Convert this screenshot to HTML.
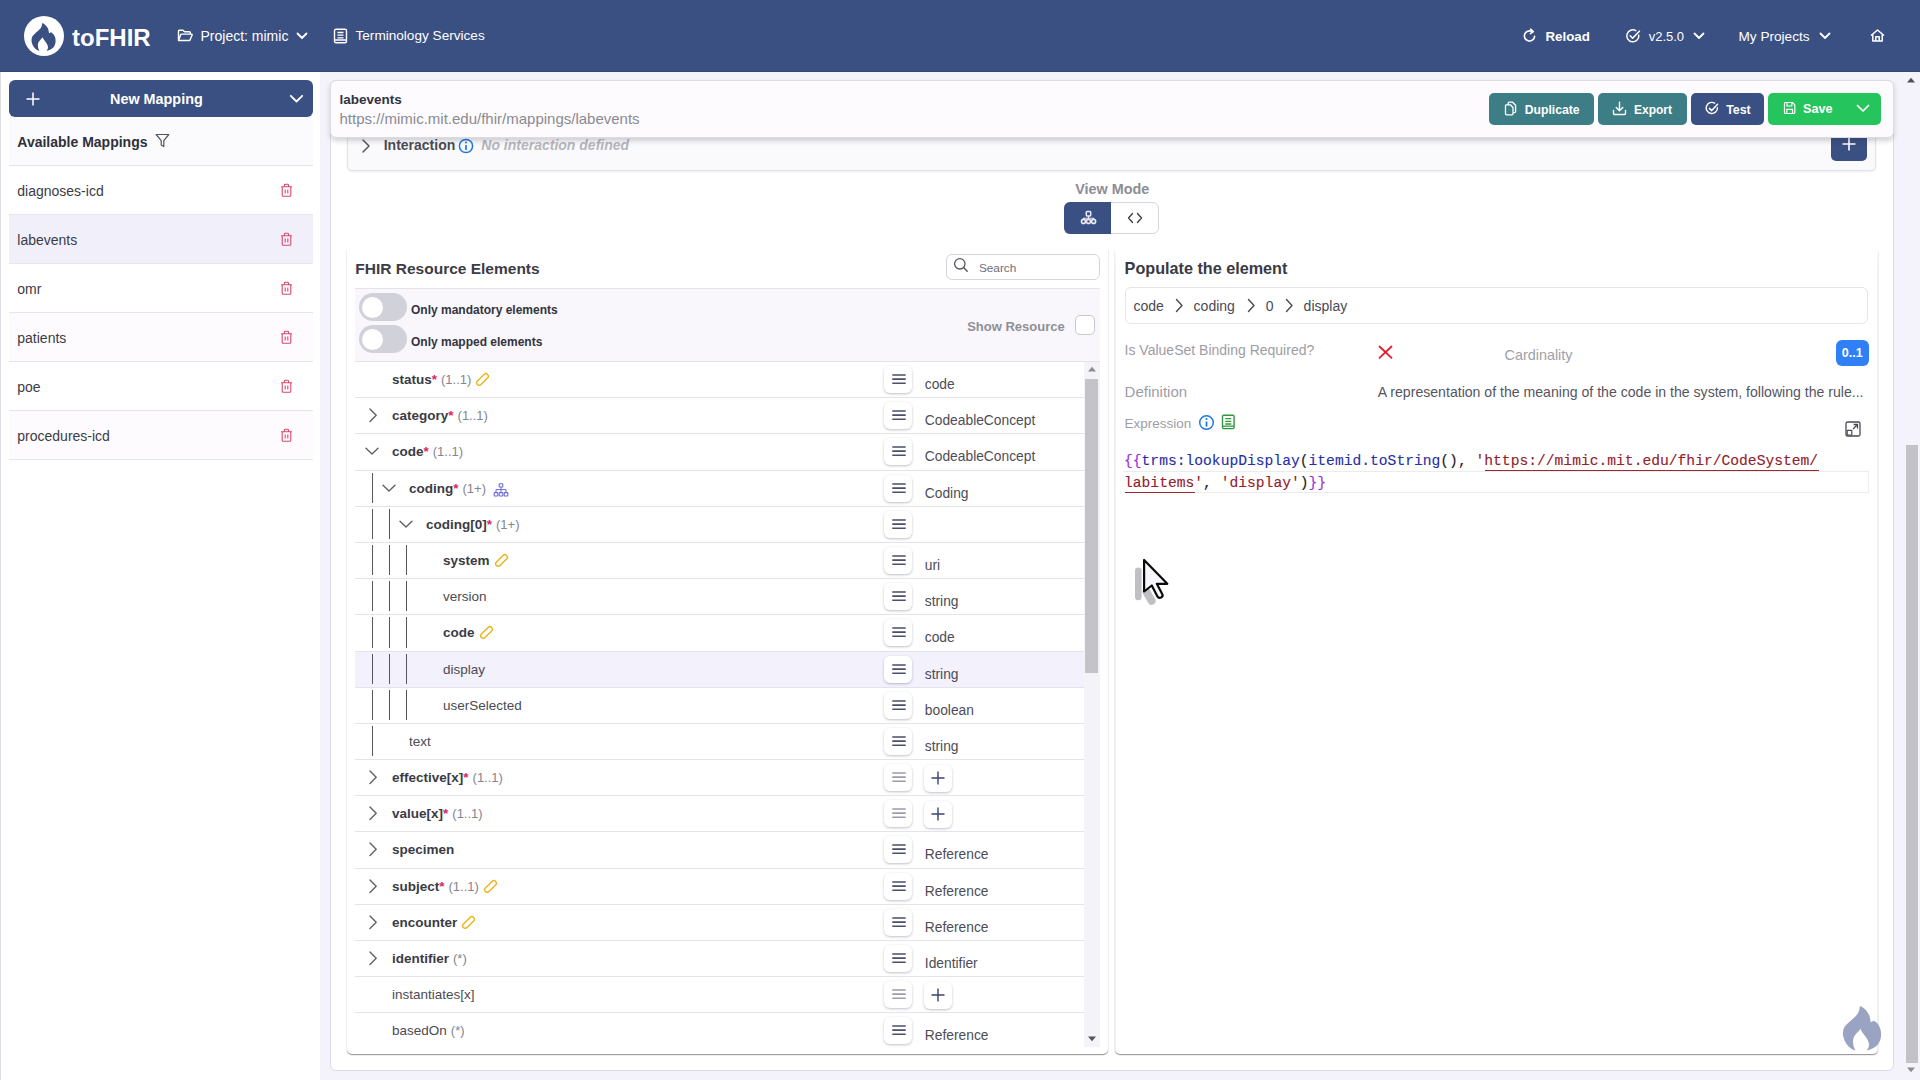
<!DOCTYPE html>
<html><head><meta charset="utf-8"><title>toFHIR</title>
<style>
html,body{margin:0;padding:0;width:1920px;height:1080px;overflow:hidden;background:#f4f3fc;}
body{position:relative;font-family:"Liberation Sans",sans-serif;}
.t{position:absolute;white-space:nowrap;}
.r{position:absolute;box-sizing:border-box;}
</style></head><body>
<div class="r" style="left:0.00px;top:72.00px;width:320.00px;height:1008.00px;background:#ffffff;"></div>
<div class="r" style="left:0.00px;top:72.00px;width:1.00px;height:1008.00px;background:#dedde5;"></div>
<div class="r" style="left:0.00px;top:0.00px;width:1920.00px;height:72.00px;background:#3a5082;"></div>
<div class="r" style="left:0.00px;top:71.00px;width:1920.00px;height:1.00px;background:#33466f;"></div>
<div class="r" style="left:24px;top:16px;width:40px;height:40px;border-radius:50%;background:#fff;"></div>
<svg class="r" style="left:24.00px;top:16.00px;" width="40" height="40" viewBox="0 0 40 40" fill="none"><path d="M18.2 6.9 C20.5 7.6 22.8 10 24 12.5 C24.6 14 24.9 15.8 25 17.2 L27.1 16.3 C29.5 17.5 31 20 31.5 23 C32 27 30.8 30.5 28.5 32.3 C26.5 33.8 24.5 34.6 22.4 35 C23.9 33.5 24.3 31.5 23.7 29.8 C23.2 28 22.2 26.8 21.3 25.6 C20.3 24.3 19.2 23 18.7 21.3 C17.8 22.8 16 24 15 25.6 C14.2 26.8 13.8 28.2 13.9 29.8 C14 31.8 14.6 33.6 15.5 35 C12.5 34.3 8.5 31 7.6 25.5 C7.2 22 8.5 19.5 10.3 18.2 C12.5 16 15.5 13.8 16.6 12.2 C17.6 10.8 18.1 8.8 18.2 6.9 Z" fill="#3a5082"/></svg>
<div class="t" style="left:72.00px;top:27.68px;font-size:24px;line-height:20px;color:#fff;font-weight:bold;font-style:normal;font-family:'Liberation Sans', sans-serif;">toFHIR</div>
<svg class="r" style="left:177.00px;top:29.00px;" width="16" height="13" viewBox="0 0 16 13" fill="none"><path d="M1.5 11.5 V2 C1.5 1.5 1.8 1.2 2.3 1.2 H6 L7.5 2.8 H12.5 C13 2.8 13.3 3.1 13.3 3.6 V5 M1.5 11.5 L3.8 5.6 C3.9 5.3 4.2 5.1 4.5 5.1 H14.6 C15 5.1 15.3 5.5 15.1 5.9 L13 11 C12.9 11.3 12.6 11.5 12.3 11.5 Z" stroke="#fff" stroke-width="1.4" stroke-linejoin="round"/></svg>
<div class="t" style="left:200.50px;top:26.35px;font-size:14px;line-height:20px;color:#fff;font-weight:normal;font-style:normal;font-family:'Liberation Sans', sans-serif;">Project: mimic</div>
<svg class="r" style="left:296.00px;top:32.00px;" width="12" height="8" viewBox="0 0 12 8" fill="none"><path d="M1.5 1.5 L6 6 L10.5 1.5" stroke="#fff" stroke-width="1.8" stroke-linecap="round" stroke-linejoin="round"/></svg>
<svg class="r" style="left:333.00px;top:28.00px;" width="15" height="16" viewBox="0 0 15 16" fill="none"><rect x="1.5" y="1.2" width="12" height="13.6" rx="1.5" stroke="#fff" stroke-width="1.4"/><path d="M4.5 4.5 H10.5 M4.5 7.2 H10.5 M4.5 9.9 H10.5 M1.5 12 H13.5" stroke="#fff" stroke-width="1.3"/></svg>
<div class="t" style="left:355.50px;top:26.49px;font-size:13.6px;line-height:20px;color:#fff;font-weight:normal;font-style:normal;font-family:'Liberation Sans', sans-serif;">Terminology Services</div>
<svg class="r" style="left:1522.00px;top:28.00px;" width="16" height="16" viewBox="0 0 16 16" fill="none"><path d="M12.6 8.2 A5.1 5.1 0 1 1 9.8 3.4" stroke="#fff" stroke-width="1.6" stroke-linecap="round"/><path d="M8.6 1.2 L11.3 3.6 L8.4 5.6" stroke="#fff" stroke-width="1.6" stroke-linecap="round" stroke-linejoin="round"/></svg>
<div class="t" style="left:1545.50px;top:27.19px;font-size:13.3px;line-height:20px;color:#fff;font-weight:bold;font-style:normal;font-family:'Liberation Sans', sans-serif;">Reload</div>
<svg class="r" style="left:1625.00px;top:28.00px;" width="17" height="16" viewBox="0 0 17 16" fill="none"><path d="M13.8 7.2 A6 6 0 1 1 10.8 2.6" stroke="#fff" stroke-width="1.5" stroke-linecap="round"/><path d="M5.2 7.8 L7.6 10.2 L14.4 3.2" stroke="#fff" stroke-width="1.6" stroke-linecap="round" stroke-linejoin="round"/></svg>
<div class="t" style="left:1648.70px;top:27.00px;font-size:13px;line-height:20px;color:#fff;font-weight:normal;font-style:normal;font-family:'Liberation Sans', sans-serif;">v2.5.0</div>
<svg class="r" style="left:1693.00px;top:32.00px;" width="12" height="8" viewBox="0 0 12 8" fill="none"><path d="M1.5 1.5 L6 6 L10.5 1.5" stroke="#fff" stroke-width="1.8" stroke-linecap="round" stroke-linejoin="round"/></svg>
<div class="t" style="left:1738.50px;top:26.79px;font-size:13.6px;line-height:20px;color:#fff;font-weight:normal;font-style:normal;font-family:'Liberation Sans', sans-serif;">My Projects</div>
<svg class="r" style="left:1819.00px;top:32.00px;" width="12" height="8" viewBox="0 0 12 8" fill="none"><path d="M1.5 1.5 L6 6 L10.5 1.5" stroke="#fff" stroke-width="1.8" stroke-linecap="round" stroke-linejoin="round"/></svg>
<svg class="r" style="left:1870.00px;top:29.00px;" width="15" height="13" viewBox="0 0 15 13" fill="none"><path d="M1 6.5 L7.5 1 L14 6.5 M2.8 5.2 V12 H12.2 V5.2 M5.8 12 V7.8 H9.2 V12" stroke="#fff" stroke-width="1.5" stroke-linejoin="round"/></svg>
<div class="r" style="left:9.00px;top:80.00px;width:304.00px;height:37.00px;background:#3a5082;border-radius:6px;"></div>
<svg class="r" style="left:25.00px;top:91.00px;" width="16" height="16" viewBox="0 0 16 16" fill="none"><path d="M8 1.5 V14.5 M1.5 8 H14.5" stroke="#fff" stroke-width="1.5"/></svg>
<div class="t" style="left:110.00px;top:89.01px;font-size:14.4px;line-height:20px;color:#fff;font-weight:bold;font-style:normal;font-family:'Liberation Sans', sans-serif;">New Mapping</div>
<svg class="r" style="left:289.00px;top:94.00px;" width="16" height="10" viewBox="0 0 16 10" fill="none"><path d="M1.8 1.8 L7.5 7.5 L13.2 1.8" stroke="#fff" stroke-width="1.8" stroke-linecap="round" stroke-linejoin="round"/></svg>
<div class="r" style="left:9.00px;top:117.00px;width:304.00px;height:49.00px;background:#fbfafd;border-bottom:1px solid #e4e3ea;"></div>
<div class="t" style="left:17.30px;top:131.85px;font-size:14px;line-height:20px;color:#2f3038;font-weight:bold;font-style:normal;font-family:'Liberation Sans', sans-serif;">Available Mappings</div>
<svg class="r" style="left:155.00px;top:133.00px;" width="15" height="15" viewBox="0 0 15 15" fill="none"><path d="M1.2 1.5 H13.8 L8.8 7.6 V13.6 L6.2 12 V7.6 Z" stroke="#555" stroke-width="1.2" stroke-linejoin="round"/></svg>
<div class="r" style="left:9.00px;top:166.00px;width:304.00px;height:49.00px;background:#ffffff;border-bottom:1px solid #e6e5eb;"></div>
<div class="t" style="left:17.30px;top:180.95px;font-size:14px;line-height:20px;color:#3b3b46;font-weight:normal;font-style:normal;font-family:'Liberation Sans', sans-serif;">diagnoses-icd</div>
<svg class="r" style="left:280.00px;top:183.00px;" width="13" height="14" viewBox="0 0 13 14" fill="none"><path d="M2.2 3.8 H10.8 V12.2 C10.8 12.8 10.4 13.2 9.8 13.2 H3.2 C2.6 13.2 2.2 12.8 2.2 12.2 Z M1 3.8 H12 M4.4 3.8 V2.2 C4.4 1.6 4.8 1.2 5.4 1.2 H7.6 C8.2 1.2 8.6 1.6 8.6 2.2 V3.8 M5.2 6.5 V10.5 M7.8 6.5 V10.5" stroke="#d9486a" stroke-width="1.1" stroke-linejoin="round"/></svg>
<div class="r" style="left:9.00px;top:215.00px;width:304.00px;height:49.00px;background:#f1f0fa;border-bottom:1px solid #e6e5eb;"></div>
<div class="t" style="left:17.30px;top:229.95px;font-size:14px;line-height:20px;color:#3b3b46;font-weight:normal;font-style:normal;font-family:'Liberation Sans', sans-serif;">labevents</div>
<svg class="r" style="left:280.00px;top:232.00px;" width="13" height="14" viewBox="0 0 13 14" fill="none"><path d="M2.2 3.8 H10.8 V12.2 C10.8 12.8 10.4 13.2 9.8 13.2 H3.2 C2.6 13.2 2.2 12.8 2.2 12.2 Z M1 3.8 H12 M4.4 3.8 V2.2 C4.4 1.6 4.8 1.2 5.4 1.2 H7.6 C8.2 1.2 8.6 1.6 8.6 2.2 V3.8 M5.2 6.5 V10.5 M7.8 6.5 V10.5" stroke="#d9486a" stroke-width="1.1" stroke-linejoin="round"/></svg>
<div class="r" style="left:9.00px;top:264.00px;width:304.00px;height:49.00px;background:#ffffff;border-bottom:1px solid #e6e5eb;"></div>
<div class="t" style="left:17.30px;top:278.95px;font-size:14px;line-height:20px;color:#3b3b46;font-weight:normal;font-style:normal;font-family:'Liberation Sans', sans-serif;">omr</div>
<svg class="r" style="left:280.00px;top:281.00px;" width="13" height="14" viewBox="0 0 13 14" fill="none"><path d="M2.2 3.8 H10.8 V12.2 C10.8 12.8 10.4 13.2 9.8 13.2 H3.2 C2.6 13.2 2.2 12.8 2.2 12.2 Z M1 3.8 H12 M4.4 3.8 V2.2 C4.4 1.6 4.8 1.2 5.4 1.2 H7.6 C8.2 1.2 8.6 1.6 8.6 2.2 V3.8 M5.2 6.5 V10.5 M7.8 6.5 V10.5" stroke="#d9486a" stroke-width="1.1" stroke-linejoin="round"/></svg>
<div class="r" style="left:9.00px;top:313.00px;width:304.00px;height:49.00px;background:#fdfbfe;border-bottom:1px solid #e6e5eb;"></div>
<div class="t" style="left:17.30px;top:327.95px;font-size:14px;line-height:20px;color:#3b3b46;font-weight:normal;font-style:normal;font-family:'Liberation Sans', sans-serif;">patients</div>
<svg class="r" style="left:280.00px;top:330.00px;" width="13" height="14" viewBox="0 0 13 14" fill="none"><path d="M2.2 3.8 H10.8 V12.2 C10.8 12.8 10.4 13.2 9.8 13.2 H3.2 C2.6 13.2 2.2 12.8 2.2 12.2 Z M1 3.8 H12 M4.4 3.8 V2.2 C4.4 1.6 4.8 1.2 5.4 1.2 H7.6 C8.2 1.2 8.6 1.6 8.6 2.2 V3.8 M5.2 6.5 V10.5 M7.8 6.5 V10.5" stroke="#d9486a" stroke-width="1.1" stroke-linejoin="round"/></svg>
<div class="r" style="left:9.00px;top:362.00px;width:304.00px;height:49.00px;background:#ffffff;border-bottom:1px solid #e6e5eb;"></div>
<div class="t" style="left:17.30px;top:376.95px;font-size:14px;line-height:20px;color:#3b3b46;font-weight:normal;font-style:normal;font-family:'Liberation Sans', sans-serif;">poe</div>
<svg class="r" style="left:280.00px;top:379.00px;" width="13" height="14" viewBox="0 0 13 14" fill="none"><path d="M2.2 3.8 H10.8 V12.2 C10.8 12.8 10.4 13.2 9.8 13.2 H3.2 C2.6 13.2 2.2 12.8 2.2 12.2 Z M1 3.8 H12 M4.4 3.8 V2.2 C4.4 1.6 4.8 1.2 5.4 1.2 H7.6 C8.2 1.2 8.6 1.6 8.6 2.2 V3.8 M5.2 6.5 V10.5 M7.8 6.5 V10.5" stroke="#d9486a" stroke-width="1.1" stroke-linejoin="round"/></svg>
<div class="r" style="left:9.00px;top:411.00px;width:304.00px;height:49.00px;background:#fdfbfe;border-bottom:1px solid #e6e5eb;"></div>
<div class="t" style="left:17.30px;top:425.95px;font-size:14px;line-height:20px;color:#3b3b46;font-weight:normal;font-style:normal;font-family:'Liberation Sans', sans-serif;">procedures-icd</div>
<svg class="r" style="left:280.00px;top:428.00px;" width="13" height="14" viewBox="0 0 13 14" fill="none"><path d="M2.2 3.8 H10.8 V12.2 C10.8 12.8 10.4 13.2 9.8 13.2 H3.2 C2.6 13.2 2.2 12.8 2.2 12.2 Z M1 3.8 H12 M4.4 3.8 V2.2 C4.4 1.6 4.8 1.2 5.4 1.2 H7.6 C8.2 1.2 8.6 1.6 8.6 2.2 V3.8 M5.2 6.5 V10.5 M7.8 6.5 V10.5" stroke="#d9486a" stroke-width="1.1" stroke-linejoin="round"/></svg>
<div class="r" style="left:330.00px;top:80.00px;width:1564.00px;height:991.00px;background:#ffffff;border:1px solid #dcdbe5;border-radius:6px;"></div>
<div class="r" style="left:347.00px;top:110.00px;width:1529.00px;height:61.00px;background:#fafafc;border:1px solid #e3e2ea;border-radius:5px;box-shadow:0 1px 2px rgba(0,0,0,.08);"></div>
<svg class="r" style="left:360.00px;top:138.00px;" width="12" height="16" viewBox="0 0 12 16" fill="none"><path d="M3 2 L9 8 L3 14" stroke="#55555f" stroke-width="1.5" stroke-linecap="round" stroke-linejoin="round"/></svg>
<div class="t" style="left:383.70px;top:135.45px;font-size:14px;line-height:20px;color:#4a4a55;font-weight:bold;font-style:normal;font-family:'Liberation Sans', sans-serif;">Interaction</div>
<svg class="r" style="left:458.00px;top:138.00px;" width="16" height="16" viewBox="0 0 16 16" fill="none"><circle cx="8" cy="8" r="6.6" stroke="#1f7ae0" stroke-width="1.5"/><path d="M8 7 V12" stroke="#1f7ae0" stroke-width="1.7"/><circle cx="8" cy="4.6" r="1" fill="#1f7ae0"/></svg>
<div class="t" style="left:481.30px;top:135.45px;font-size:14px;line-height:20px;color:#b5b5bd;font-weight:bold;font-style:italic;font-family:'Liberation Sans', sans-serif;">No interaction defined</div>
<div class="r" style="left:1831.00px;top:125.00px;width:36.00px;height:36.00px;background:#3a5082;border-radius:5px;"></div>
<svg class="r" style="left:1841.00px;top:136.00px;" width="16" height="16" viewBox="0 0 16 16" fill="none"><path d="M8 1.5 V14.5 M1.5 8 H14.5" stroke="#fff" stroke-width="1.6"/></svg>
<div class="r" style="left:330.00px;top:80.00px;width:1564.00px;height:57.50px;background:#fdfbfd;border:1px solid #dcdbe1;border-radius:6px;box-shadow:0 3px 5px rgba(40,40,50,.20);"></div>
<div class="t" style="left:339.50px;top:90.32px;font-size:13.5px;line-height:20px;color:#33343c;font-weight:bold;font-style:normal;font-family:'Liberation Sans', sans-serif;">labevents</div>
<div class="t" style="left:339.50px;top:108.50px;font-size:15px;line-height:20px;color:#8a8a92;font-weight:normal;font-style:normal;font-family:'Liberation Sans', sans-serif;">https://mimic.mit.edu/fhir/mappings/labevents</div>
<div class="r" style="left:1489.20px;top:93.30px;width:104.50px;height:31.30px;background:#3d7d85;border-radius:5px;"></div>
<div class="r" style="left:1598.00px;top:93.30px;width:88.80px;height:31.30px;background:#3d7d85;border-radius:5px;"></div>
<div class="r" style="left:1691.20px;top:93.30px;width:72.60px;height:31.30px;background:#3a5082;border-radius:5px;"></div>
<div class="r" style="left:1768.00px;top:93.30px;width:112.80px;height:31.30px;background:#25c45d;border-radius:5px;"></div>
<svg class="r" style="left:1504.00px;top:101.00px;" width="13" height="15" viewBox="0 0 13 15" fill="none"><path d="M4.2 3.8 V2.2 C4.2 1.6 4.6 1.2 5.2 1.2 H8.6 L11.6 4.2 V10.6 C11.6 11.2 11.2 11.6 10.6 11.6 H9 M1.5 4.8 C1.5 4.2 1.9 3.8 2.5 3.8 H6.3 L9 6.5 V12.8 C9 13.4 8.6 13.8 8 13.8 H2.5 C1.9 13.8 1.5 13.4 1.5 12.8 Z" stroke="#fff" stroke-width="1.3" stroke-linejoin="round"/></svg>
<div class="t" style="left:1524.70px;top:99.57px;font-size:12.2px;line-height:20px;color:#fff;font-weight:bold;font-style:normal;font-family:'Liberation Sans', sans-serif;">Duplicate</div>
<svg class="r" style="left:1612.00px;top:101.00px;" width="15" height="15" viewBox="0 0 15 15" fill="none"><path d="M7.5 1.2 V9.5 M4.2 6.4 L7.5 9.7 L10.8 6.4 M1.5 9.5 V12.5 C1.5 13.1 1.9 13.5 2.5 13.5 H12.5 C13.1 13.5 13.5 13.1 13.5 12.5 V9.5" stroke="#fff" stroke-width="1.4" stroke-linecap="round" stroke-linejoin="round"/></svg>
<div class="t" style="left:1634.00px;top:99.64px;font-size:12px;line-height:20px;color:#fff;font-weight:bold;font-style:normal;font-family:'Liberation Sans', sans-serif;">Export</div>
<svg class="r" style="left:1705.00px;top:101.00px;" width="14" height="15" viewBox="0 0 14 15" fill="none"><path d="M12.4 6.6 A5.6 5.6 0 1 1 9.6 2.1" stroke="#fff" stroke-width="1.4" stroke-linecap="round"/><path d="M4.4 7.4 L6.7 9.6 L12.6 3.2" stroke="#fff" stroke-width="1.5" stroke-linecap="round" stroke-linejoin="round"/></svg>
<div class="t" style="left:1726.20px;top:99.50px;font-size:12.4px;line-height:20px;color:#fff;font-weight:bold;font-style:normal;font-family:'Liberation Sans', sans-serif;">Test</div>
<svg class="r" style="left:1783.00px;top:101.00px;" width="13" height="14" viewBox="0 0 13 14" fill="none"><path d="M1.5 2.5 C1.5 1.9 1.9 1.5 2.5 1.5 H9.5 L11.8 3.8 V11.5 C11.8 12.1 11.4 12.5 10.8 12.5 H2.5 C1.9 12.5 1.5 12.1 1.5 11.5 Z M4 1.5 V5 H8.8 V1.5 M3.8 12.5 V8.3 H9.5 V12.5" stroke="#fff" stroke-width="1.2" stroke-linejoin="round"/></svg>
<div class="t" style="left:1803.00px;top:99.43px;font-size:12.6px;line-height:20px;color:#fff;font-weight:bold;font-style:normal;font-family:'Liberation Sans', sans-serif;">Save</div>
<svg class="r" style="left:1856.00px;top:104.00px;" width="14" height="9" viewBox="0 0 14 9" fill="none"><path d="M1.5 1.5 L7 7 L12.5 1.5" stroke="#fff" stroke-width="1.7" stroke-linecap="round" stroke-linejoin="round"/></svg>
<div class="t" style="left:1075.20px;top:179.01px;font-size:14.4px;line-height:20px;color:#8d8d95;font-weight:bold;font-style:normal;font-family:'Liberation Sans', sans-serif;">View Mode</div>
<div class="r" style="left:1064.00px;top:202.00px;width:95.00px;height:32.00px;background:#fff;border:1px solid #d7d6de;border-radius:6px;"></div>
<div class="r" style="left:1064.00px;top:202.00px;width:47.00px;height:32.00px;background:#3a5082;border-radius:6px 0 0 6px;"></div>
<svg class="r" style="left:1080.00px;top:209.00px;" width="17" height="16" viewBox="0 0 17 16" fill="none"><rect x="6.3" y="2.5" width="4.4" height="4.4" rx=".8" stroke="#e6eeff" stroke-width="1.5"/><path d="M8.5 6.9 V9.3 M3.5 10.4 V9.3 H13.6 V10.4 M8.5 9.3 V10.4" stroke="#dfe8ff" stroke-width="1.1"/><circle cx="3.5" cy="12.4" r="2" stroke="#e6eeff" stroke-width="1.6"/><circle cx="8.5" cy="12.4" r="2" stroke="#f4dde3" stroke-width="1.6"/><circle cx="13.6" cy="12.4" r="2" stroke="#e0f0ff" stroke-width="1.6"/></svg>
<svg class="r" style="left:1127.00px;top:211.00px;" width="16" height="14" viewBox="0 0 16 14" fill="none"><path d="M5.5 2.5 L1.5 7 L5.5 11.5 M10.5 2.5 L14.5 7 L10.5 11.5" stroke="#3a3a44" stroke-width="1.3" stroke-linecap="round" stroke-linejoin="round"/></svg>
<div class="r" style="left:347.00px;top:249.00px;width:761.00px;height:805.00px;background:#fff;border-radius:0 0 5px 5px;box-shadow:0 1px 1.2px rgba(0,0,0,.45);"></div>
<div class="r" style="left:346.00px;top:249.00px;width:1.00px;height:802.00px;background:linear-gradient(rgba(240,239,244,0),#f0eff4 20px);"></div>
<div class="r" style="left:1107.50px;top:249.00px;width:1.00px;height:802.00px;background:linear-gradient(rgba(240,239,244,0),#f0eff4 20px);"></div>
<div class="t" style="left:355.30px;top:258.63px;font-size:15.5px;line-height:20px;color:#3c3c46;font-weight:bold;font-style:normal;font-family:'Liberation Sans', sans-serif;">FHIR Resource Elements</div>
<div class="r" style="left:946.20px;top:254.30px;width:153.80px;height:25.40px;background:#fff;border:1px solid #d6d5dc;border-radius:6px;"></div>
<svg class="r" style="left:953.00px;top:257.00px;" width="16" height="16" viewBox="0 0 16 16" fill="none"><circle cx="6.8" cy="6.8" r="5.2" stroke="#55555f" stroke-width="1.3"/><path d="M10.6 10.6 L14.2 14.2" stroke="#55555f" stroke-width="1.4" stroke-linecap="round"/></svg>
<div class="t" style="left:978.90px;top:257.91px;font-size:11.8px;line-height:20px;color:#6e6e78;font-weight:normal;font-style:normal;font-family:'Liberation Sans', sans-serif;">Search</div>
<div class="r" style="left:355.00px;top:287.80px;width:745.00px;height:74.20px;background:#f9f7fb;border-top:1px solid #e4e3e9;border-bottom:1px solid #e4e3e9;"></div>
<div class="r" style="left:359.20px;top:293.00px;width:47.60px;height:28.00px;background:#d0d1d9;border-radius:14px;"></div>
<div class="r" style="left:362.4px;top:296.5px;width:21px;height:21px;border-radius:50%;background:#fff;"></div>
<div class="r" style="left:359.20px;top:325.00px;width:47.60px;height:28.00px;background:#d0d1d9;border-radius:14px;"></div>
<div class="r" style="left:362.4px;top:328.5px;width:21px;height:21px;border-radius:50%;background:#fff;"></div>
<div class="t" style="left:411.00px;top:299.84px;font-size:12px;line-height:20px;color:#33343e;font-weight:bold;font-style:normal;font-family:'Liberation Sans', sans-serif;">Only mandatory elements</div>
<div class="t" style="left:411.00px;top:331.54px;font-size:12px;line-height:20px;color:#33343e;font-weight:bold;font-style:normal;font-family:'Liberation Sans', sans-serif;">Only mapped elements</div>
<div class="t" style="left:967.20px;top:317.30px;font-size:13px;line-height:20px;color:#8f8f98;font-weight:bold;font-style:normal;font-family:'Liberation Sans', sans-serif;">Show Resource</div>
<div class="r" style="left:1074.80px;top:315.00px;width:20.20px;height:20.30px;background:#fff;border:1.5px solid #c9c8cf;border-radius:5px;"></div>
<div class="r" style="left:355.00px;top:361.00px;width:729.00px;height:1.00px;background:#e4e3e9;"></div>
<div class="t" style="left:392.00px;top:370.22px;font-size:13.5px;line-height:20px;color:#3b3b44;font-weight:bold;font-style:normal;font-family:'Liberation Sans', sans-serif;">status</div>
<div class="t" style="left:431.77px;top:370.22px;font-size:13.5px;line-height:20px;color:#e0245e;font-weight:bold;font-style:normal;font-family:'Liberation Sans', sans-serif;">*</div>
<div class="t" style="left:441.03px;top:370.40px;font-size:13px;line-height:20px;color:#85858e;font-weight:normal;font-style:normal;font-family:'Liberation Sans', sans-serif;">(1..1)</div>
<svg class="r" style="left:475.38px;top:371.50px;" width="15" height="15" viewBox="0 0 15 15" fill="none"><rect x="0.3" y="5" width="14.4" height="5" rx="2.5" transform="rotate(-45 7.5 7.5)" stroke="#e9b41c" stroke-width="1.4"/></svg>
<div class="r" style="left:884.00px;top:366.00px;width:28.00px;height:27.00px;background:#fff;border-radius:6px;box-shadow:0 1px 2.5px rgba(30,30,60,.28);"></div>
<svg class="r" style="left:891.50px;top:373.00px;" width="14" height="12" viewBox="0 0 14 12" fill="none"><path d="M.3 2 H13.7 M.3 6.1 H13.7 M.3 10.2 H13.7" stroke="#4a4f6a" stroke-width="1.6"/></svg>
<div class="t" style="left:924.80px;top:375.32px;font-size:13.8px;line-height:20px;color:#4d4d57;font-weight:normal;font-style:normal;font-family:'Liberation Sans', sans-serif;">code</div>
<div class="r" style="left:355.00px;top:397.00px;width:729.00px;height:1.00px;background:#e4e3e9;"></div>
<svg class="r" style="left:367.00px;top:407.00px;" width="12" height="16" viewBox="0 0 12 16" fill="none"><path d="M3 2 L9.2 8.2 L3 14.4" stroke="#606068" stroke-width="1.4" stroke-linecap="round" stroke-linejoin="round"/></svg>
<div class="t" style="left:392.00px;top:406.22px;font-size:13.5px;line-height:20px;color:#3b3b44;font-weight:bold;font-style:normal;font-family:'Liberation Sans', sans-serif;">category</div>
<div class="t" style="left:448.28px;top:406.22px;font-size:13.5px;line-height:20px;color:#e0245e;font-weight:bold;font-style:normal;font-family:'Liberation Sans', sans-serif;">*</div>
<div class="t" style="left:457.55px;top:406.40px;font-size:13px;line-height:20px;color:#85858e;font-weight:normal;font-style:normal;font-family:'Liberation Sans', sans-serif;">(1..1)</div>
<div class="r" style="left:884.00px;top:402.00px;width:28.00px;height:27.00px;background:#fff;border-radius:6px;box-shadow:0 1px 2.5px rgba(30,30,60,.28);"></div>
<svg class="r" style="left:891.50px;top:409.00px;" width="14" height="12" viewBox="0 0 14 12" fill="none"><path d="M.3 2 H13.7 M.3 6.1 H13.7 M.3 10.2 H13.7" stroke="#4a4f6a" stroke-width="1.6"/></svg>
<div class="t" style="left:924.80px;top:411.32px;font-size:13.8px;line-height:20px;color:#4d4d57;font-weight:normal;font-style:normal;font-family:'Liberation Sans', sans-serif;">CodeableConcept</div>
<div class="r" style="left:355.00px;top:433.00px;width:729.00px;height:1.00px;background:#e4e3e9;"></div>
<svg class="r" style="left:364.00px;top:445.00px;" width="16" height="12" viewBox="0 0 16 12" fill="none"><path d="M2 3.2 L8 9 L14 3.2" stroke="#606068" stroke-width="1.4" stroke-linecap="round" stroke-linejoin="round"/></svg>
<div class="t" style="left:392.00px;top:442.22px;font-size:13.5px;line-height:20px;color:#3b3b44;font-weight:bold;font-style:normal;font-family:'Liberation Sans', sans-serif;">code</div>
<div class="t" style="left:423.52px;top:442.22px;font-size:13.5px;line-height:20px;color:#e0245e;font-weight:bold;font-style:normal;font-family:'Liberation Sans', sans-serif;">*</div>
<div class="t" style="left:432.78px;top:442.40px;font-size:13px;line-height:20px;color:#85858e;font-weight:normal;font-style:normal;font-family:'Liberation Sans', sans-serif;">(1..1)</div>
<div class="r" style="left:884.00px;top:438.00px;width:28.00px;height:27.00px;background:#fff;border-radius:6px;box-shadow:0 1px 2.5px rgba(30,30,60,.28);"></div>
<svg class="r" style="left:891.50px;top:445.00px;" width="14" height="12" viewBox="0 0 14 12" fill="none"><path d="M.3 2 H13.7 M.3 6.1 H13.7 M.3 10.2 H13.7" stroke="#4a4f6a" stroke-width="1.6"/></svg>
<div class="t" style="left:924.80px;top:447.32px;font-size:13.8px;line-height:20px;color:#4d4d57;font-weight:normal;font-style:normal;font-family:'Liberation Sans', sans-serif;">CodeableConcept</div>
<div class="r" style="left:355.00px;top:470.00px;width:729.00px;height:1.00px;background:#e4e3e9;"></div>
<div class="r" style="left:372.00px;top:473.00px;width:1.00px;height:30.00px;background:#55555c;"></div>
<svg class="r" style="left:381.00px;top:482.00px;" width="16" height="12" viewBox="0 0 16 12" fill="none"><path d="M2 3.2 L8 9 L14 3.2" stroke="#606068" stroke-width="1.4" stroke-linecap="round" stroke-linejoin="round"/></svg>
<div class="t" style="left:409.00px;top:479.22px;font-size:13.5px;line-height:20px;color:#3b3b44;font-weight:bold;font-style:normal;font-family:'Liberation Sans', sans-serif;">coding</div>
<div class="t" style="left:453.25px;top:479.22px;font-size:13.5px;line-height:20px;color:#e0245e;font-weight:bold;font-style:normal;font-family:'Liberation Sans', sans-serif;">*</div>
<div class="t" style="left:462.52px;top:479.40px;font-size:13px;line-height:20px;color:#85858e;font-weight:normal;font-style:normal;font-family:'Liberation Sans', sans-serif;">(1+)</div>
<svg class="r" style="left:493.00px;top:482.50px;" width="16" height="14" viewBox="0 0 16 14" fill="none"><rect x="6.2" y=".8" width="3.6" height="3.2" rx=".5" stroke="#6a6ad6" stroke-width="1.1"/><path d="M8 4 V6.6 M3 9.4 V6.6 H13 V9.4 M8 6.6 V9.4" stroke="#6a6ad6" stroke-width="1"/><rect x="1.2" y="9.6" width="3.6" height="3.4" rx=".6" stroke="#6a6ad6" stroke-width="1.1"/><rect x="6.2" y="9.6" width="3.6" height="3.4" rx=".6" stroke="#6a6ad6" stroke-width="1.1"/><rect x="11.2" y="9.6" width="3.6" height="3.4" rx=".6" stroke="#6a6ad6" stroke-width="1.1"/></svg>
<div class="r" style="left:884.00px;top:475.00px;width:28.00px;height:27.00px;background:#fff;border-radius:6px;box-shadow:0 1px 2.5px rgba(30,30,60,.28);"></div>
<svg class="r" style="left:891.50px;top:482.00px;" width="14" height="12" viewBox="0 0 14 12" fill="none"><path d="M.3 2 H13.7 M.3 6.1 H13.7 M.3 10.2 H13.7" stroke="#4a4f6a" stroke-width="1.6"/></svg>
<div class="t" style="left:924.80px;top:484.32px;font-size:13.8px;line-height:20px;color:#4d4d57;font-weight:normal;font-style:normal;font-family:'Liberation Sans', sans-serif;">Coding</div>
<div class="r" style="left:355.00px;top:506.00px;width:729.00px;height:1.00px;background:#e4e3e9;"></div>
<div class="r" style="left:372.00px;top:509.00px;width:1.00px;height:30.00px;background:#55555c;"></div>
<div class="r" style="left:389.00px;top:509.00px;width:1.00px;height:30.00px;background:#55555c;"></div>
<svg class="r" style="left:398.00px;top:518.00px;" width="16" height="12" viewBox="0 0 16 12" fill="none"><path d="M2 3.2 L8 9 L14 3.2" stroke="#606068" stroke-width="1.4" stroke-linecap="round" stroke-linejoin="round"/></svg>
<div class="t" style="left:426.00px;top:515.22px;font-size:13.5px;line-height:20px;color:#3b3b44;font-weight:bold;font-style:normal;font-family:'Liberation Sans', sans-serif;">coding[0]</div>
<div class="t" style="left:486.75px;top:515.22px;font-size:13.5px;line-height:20px;color:#e0245e;font-weight:bold;font-style:normal;font-family:'Liberation Sans', sans-serif;">*</div>
<div class="t" style="left:496.02px;top:515.40px;font-size:13px;line-height:20px;color:#85858e;font-weight:normal;font-style:normal;font-family:'Liberation Sans', sans-serif;">(1+)</div>
<div class="r" style="left:884.00px;top:511.00px;width:28.00px;height:27.00px;background:#fff;border-radius:6px;box-shadow:0 1px 2.5px rgba(30,30,60,.28);"></div>
<svg class="r" style="left:891.50px;top:518.00px;" width="14" height="12" viewBox="0 0 14 12" fill="none"><path d="M.3 2 H13.7 M.3 6.1 H13.7 M.3 10.2 H13.7" stroke="#4a4f6a" stroke-width="1.6"/></svg>
<div class="r" style="left:355.00px;top:542.00px;width:729.00px;height:1.00px;background:#e4e3e9;"></div>
<div class="r" style="left:372.00px;top:545.00px;width:1.00px;height:30.00px;background:#55555c;"></div>
<div class="r" style="left:389.00px;top:545.00px;width:1.00px;height:30.00px;background:#55555c;"></div>
<div class="r" style="left:406.00px;top:545.00px;width:1.00px;height:30.00px;background:#55555c;"></div>
<div class="t" style="left:443.00px;top:551.22px;font-size:13.5px;line-height:20px;color:#3b3b44;font-weight:bold;font-style:normal;font-family:'Liberation Sans', sans-serif;">system</div>
<svg class="r" style="left:493.55px;top:552.50px;" width="15" height="15" viewBox="0 0 15 15" fill="none"><rect x="0.3" y="5" width="14.4" height="5" rx="2.5" transform="rotate(-45 7.5 7.5)" stroke="#e9b41c" stroke-width="1.4"/></svg>
<div class="r" style="left:884.00px;top:547.00px;width:28.00px;height:27.00px;background:#fff;border-radius:6px;box-shadow:0 1px 2.5px rgba(30,30,60,.28);"></div>
<svg class="r" style="left:891.50px;top:554.00px;" width="14" height="12" viewBox="0 0 14 12" fill="none"><path d="M.3 2 H13.7 M.3 6.1 H13.7 M.3 10.2 H13.7" stroke="#4a4f6a" stroke-width="1.6"/></svg>
<div class="t" style="left:924.80px;top:556.32px;font-size:13.8px;line-height:20px;color:#4d4d57;font-weight:normal;font-style:normal;font-family:'Liberation Sans', sans-serif;">uri</div>
<div class="r" style="left:355.00px;top:578.00px;width:729.00px;height:1.00px;background:#e4e3e9;"></div>
<div class="r" style="left:372.00px;top:581.00px;width:1.00px;height:30.00px;background:#55555c;"></div>
<div class="r" style="left:389.00px;top:581.00px;width:1.00px;height:30.00px;background:#55555c;"></div>
<div class="r" style="left:406.00px;top:581.00px;width:1.00px;height:30.00px;background:#55555c;"></div>
<div class="t" style="left:443.00px;top:587.22px;font-size:13.5px;line-height:20px;color:#4b4b53;font-weight:normal;font-style:normal;font-family:'Liberation Sans', sans-serif;">version</div>
<div class="r" style="left:884.00px;top:583.00px;width:28.00px;height:27.00px;background:#fff;border-radius:6px;box-shadow:0 1px 2.5px rgba(30,30,60,.28);"></div>
<svg class="r" style="left:891.50px;top:590.00px;" width="14" height="12" viewBox="0 0 14 12" fill="none"><path d="M.3 2 H13.7 M.3 6.1 H13.7 M.3 10.2 H13.7" stroke="#4a4f6a" stroke-width="1.6"/></svg>
<div class="t" style="left:924.80px;top:592.32px;font-size:13.8px;line-height:20px;color:#4d4d57;font-weight:normal;font-style:normal;font-family:'Liberation Sans', sans-serif;">string</div>
<div class="r" style="left:355.00px;top:614.00px;width:729.00px;height:1.00px;background:#e4e3e9;"></div>
<div class="r" style="left:372.00px;top:617.00px;width:1.00px;height:31.00px;background:#55555c;"></div>
<div class="r" style="left:389.00px;top:617.00px;width:1.00px;height:31.00px;background:#55555c;"></div>
<div class="r" style="left:406.00px;top:617.00px;width:1.00px;height:31.00px;background:#55555c;"></div>
<div class="t" style="left:443.00px;top:623.22px;font-size:13.5px;line-height:20px;color:#3b3b44;font-weight:bold;font-style:normal;font-family:'Liberation Sans', sans-serif;">code</div>
<svg class="r" style="left:478.52px;top:624.50px;" width="15" height="15" viewBox="0 0 15 15" fill="none"><rect x="0.3" y="5" width="14.4" height="5" rx="2.5" transform="rotate(-45 7.5 7.5)" stroke="#e9b41c" stroke-width="1.4"/></svg>
<div class="r" style="left:884.00px;top:619.00px;width:28.00px;height:27.00px;background:#fff;border-radius:6px;box-shadow:0 1px 2.5px rgba(30,30,60,.28);"></div>
<svg class="r" style="left:891.50px;top:626.00px;" width="14" height="12" viewBox="0 0 14 12" fill="none"><path d="M.3 2 H13.7 M.3 6.1 H13.7 M.3 10.2 H13.7" stroke="#4a4f6a" stroke-width="1.6"/></svg>
<div class="t" style="left:924.80px;top:628.32px;font-size:13.8px;line-height:20px;color:#4d4d57;font-weight:normal;font-style:normal;font-family:'Liberation Sans', sans-serif;">code</div>
<div class="r" style="left:355.00px;top:651.00px;width:729.00px;height:36.00px;background:#f3f1fc;"></div>
<div class="r" style="left:355.00px;top:651.00px;width:729.00px;height:1.00px;background:#e4e3e9;"></div>
<div class="r" style="left:372.00px;top:654.00px;width:1.00px;height:30.00px;background:#55555c;"></div>
<div class="r" style="left:389.00px;top:654.00px;width:1.00px;height:30.00px;background:#55555c;"></div>
<div class="r" style="left:406.00px;top:654.00px;width:1.00px;height:30.00px;background:#55555c;"></div>
<div class="t" style="left:443.00px;top:660.22px;font-size:13.5px;line-height:20px;color:#4b4b53;font-weight:normal;font-style:normal;font-family:'Liberation Sans', sans-serif;">display</div>
<div class="r" style="left:884.00px;top:656.00px;width:28.00px;height:27.00px;background:#fff;border-radius:6px;box-shadow:0 1px 2.5px rgba(30,30,60,.28);"></div>
<svg class="r" style="left:891.50px;top:663.00px;" width="14" height="12" viewBox="0 0 14 12" fill="none"><path d="M.3 2 H13.7 M.3 6.1 H13.7 M.3 10.2 H13.7" stroke="#4a4f6a" stroke-width="1.6"/></svg>
<div class="t" style="left:924.80px;top:665.32px;font-size:13.8px;line-height:20px;color:#4d4d57;font-weight:normal;font-style:normal;font-family:'Liberation Sans', sans-serif;">string</div>
<div class="r" style="left:355.00px;top:687.00px;width:729.00px;height:1.00px;background:#e4e3e9;"></div>
<div class="r" style="left:372.00px;top:690.00px;width:1.00px;height:30.00px;background:#55555c;"></div>
<div class="r" style="left:389.00px;top:690.00px;width:1.00px;height:30.00px;background:#55555c;"></div>
<div class="r" style="left:406.00px;top:690.00px;width:1.00px;height:30.00px;background:#55555c;"></div>
<div class="t" style="left:443.00px;top:696.22px;font-size:13.5px;line-height:20px;color:#4b4b53;font-weight:normal;font-style:normal;font-family:'Liberation Sans', sans-serif;">userSelected</div>
<div class="r" style="left:884.00px;top:692.00px;width:28.00px;height:27.00px;background:#fff;border-radius:6px;box-shadow:0 1px 2.5px rgba(30,30,60,.28);"></div>
<svg class="r" style="left:891.50px;top:699.00px;" width="14" height="12" viewBox="0 0 14 12" fill="none"><path d="M.3 2 H13.7 M.3 6.1 H13.7 M.3 10.2 H13.7" stroke="#4a4f6a" stroke-width="1.6"/></svg>
<div class="t" style="left:924.80px;top:701.32px;font-size:13.8px;line-height:20px;color:#4d4d57;font-weight:normal;font-style:normal;font-family:'Liberation Sans', sans-serif;">boolean</div>
<div class="r" style="left:355.00px;top:723.00px;width:729.00px;height:1.00px;background:#e4e3e9;"></div>
<div class="r" style="left:372.00px;top:726.00px;width:1.00px;height:30.00px;background:#55555c;"></div>
<div class="t" style="left:409.00px;top:732.22px;font-size:13.5px;line-height:20px;color:#4b4b53;font-weight:normal;font-style:normal;font-family:'Liberation Sans', sans-serif;">text</div>
<div class="r" style="left:884.00px;top:728.00px;width:28.00px;height:27.00px;background:#fff;border-radius:6px;box-shadow:0 1px 2.5px rgba(30,30,60,.28);"></div>
<svg class="r" style="left:891.50px;top:735.00px;" width="14" height="12" viewBox="0 0 14 12" fill="none"><path d="M.3 2 H13.7 M.3 6.1 H13.7 M.3 10.2 H13.7" stroke="#4a4f6a" stroke-width="1.6"/></svg>
<div class="t" style="left:924.80px;top:737.32px;font-size:13.8px;line-height:20px;color:#4d4d57;font-weight:normal;font-style:normal;font-family:'Liberation Sans', sans-serif;">string</div>
<div class="r" style="left:355.00px;top:759.00px;width:729.00px;height:1.00px;background:#e4e3e9;"></div>
<svg class="r" style="left:367.00px;top:769.00px;" width="12" height="16" viewBox="0 0 12 16" fill="none"><path d="M3 2 L9.2 8.2 L3 14.4" stroke="#606068" stroke-width="1.4" stroke-linecap="round" stroke-linejoin="round"/></svg>
<div class="t" style="left:392.00px;top:768.22px;font-size:13.5px;line-height:20px;color:#3b3b44;font-weight:bold;font-style:normal;font-family:'Liberation Sans', sans-serif;">effective[x]</div>
<div class="t" style="left:463.28px;top:768.22px;font-size:13.5px;line-height:20px;color:#e0245e;font-weight:bold;font-style:normal;font-family:'Liberation Sans', sans-serif;">*</div>
<div class="t" style="left:472.55px;top:768.40px;font-size:13px;line-height:20px;color:#85858e;font-weight:normal;font-style:normal;font-family:'Liberation Sans', sans-serif;">(1..1)</div>
<div class="r" style="left:884.00px;top:764.00px;width:28.00px;height:27.00px;background:#fff;border-radius:6px;box-shadow:0 1px 2.5px rgba(30,30,60,.28);"></div>
<svg class="r" style="left:891.50px;top:771.00px;" width="14" height="12" viewBox="0 0 14 12" fill="none"><path d="M.3 2 H13.7 M.3 6.1 H13.7 M.3 10.2 H13.7" stroke="#9a9cab" stroke-width="1.6"/></svg>
<div class="r" style="left:924.20px;top:765.00px;width:27.80px;height:27.00px;background:#fff;border-radius:6px;box-shadow:0 1px 2.5px rgba(30,30,60,.28);"></div>
<svg class="r" style="left:930.00px;top:769.50px;" width="16" height="16" viewBox="0 0 16 16" fill="none"><path d="M8 1.5 V14.5 M1.5 8 H14.5" stroke="#3a4470" stroke-width="1.4"/></svg>
<div class="r" style="left:355.00px;top:795.00px;width:729.00px;height:1.00px;background:#e4e3e9;"></div>
<svg class="r" style="left:367.00px;top:805.00px;" width="12" height="16" viewBox="0 0 12 16" fill="none"><path d="M3 2 L9.2 8.2 L3 14.4" stroke="#606068" stroke-width="1.4" stroke-linecap="round" stroke-linejoin="round"/></svg>
<div class="t" style="left:392.00px;top:804.22px;font-size:13.5px;line-height:20px;color:#3b3b44;font-weight:bold;font-style:normal;font-family:'Liberation Sans', sans-serif;">value[x]</div>
<div class="t" style="left:443.03px;top:804.22px;font-size:13.5px;line-height:20px;color:#e0245e;font-weight:bold;font-style:normal;font-family:'Liberation Sans', sans-serif;">*</div>
<div class="t" style="left:452.30px;top:804.40px;font-size:13px;line-height:20px;color:#85858e;font-weight:normal;font-style:normal;font-family:'Liberation Sans', sans-serif;">(1..1)</div>
<div class="r" style="left:884.00px;top:800.00px;width:28.00px;height:27.00px;background:#fff;border-radius:6px;box-shadow:0 1px 2.5px rgba(30,30,60,.28);"></div>
<svg class="r" style="left:891.50px;top:807.00px;" width="14" height="12" viewBox="0 0 14 12" fill="none"><path d="M.3 2 H13.7 M.3 6.1 H13.7 M.3 10.2 H13.7" stroke="#9a9cab" stroke-width="1.6"/></svg>
<div class="r" style="left:924.20px;top:801.00px;width:27.80px;height:27.00px;background:#fff;border-radius:6px;box-shadow:0 1px 2.5px rgba(30,30,60,.28);"></div>
<svg class="r" style="left:930.00px;top:805.50px;" width="16" height="16" viewBox="0 0 16 16" fill="none"><path d="M8 1.5 V14.5 M1.5 8 H14.5" stroke="#3a4470" stroke-width="1.4"/></svg>
<div class="r" style="left:355.00px;top:831.00px;width:729.00px;height:1.00px;background:#e4e3e9;"></div>
<svg class="r" style="left:367.00px;top:841.00px;" width="12" height="16" viewBox="0 0 12 16" fill="none"><path d="M3 2 L9.2 8.2 L3 14.4" stroke="#606068" stroke-width="1.4" stroke-linecap="round" stroke-linejoin="round"/></svg>
<div class="t" style="left:392.00px;top:840.22px;font-size:13.5px;line-height:20px;color:#3b3b44;font-weight:bold;font-style:normal;font-family:'Liberation Sans', sans-serif;">specimen</div>
<div class="r" style="left:884.00px;top:836.00px;width:28.00px;height:27.00px;background:#fff;border-radius:6px;box-shadow:0 1px 2.5px rgba(30,30,60,.28);"></div>
<svg class="r" style="left:891.50px;top:843.00px;" width="14" height="12" viewBox="0 0 14 12" fill="none"><path d="M.3 2 H13.7 M.3 6.1 H13.7 M.3 10.2 H13.7" stroke="#4a4f6a" stroke-width="1.6"/></svg>
<div class="t" style="left:924.80px;top:845.32px;font-size:13.8px;line-height:20px;color:#4d4d57;font-weight:normal;font-style:normal;font-family:'Liberation Sans', sans-serif;">Reference</div>
<div class="r" style="left:355.00px;top:868.00px;width:729.00px;height:1.00px;background:#e4e3e9;"></div>
<svg class="r" style="left:367.00px;top:878.00px;" width="12" height="16" viewBox="0 0 12 16" fill="none"><path d="M3 2 L9.2 8.2 L3 14.4" stroke="#606068" stroke-width="1.4" stroke-linecap="round" stroke-linejoin="round"/></svg>
<div class="t" style="left:392.00px;top:877.22px;font-size:13.5px;line-height:20px;color:#3b3b44;font-weight:bold;font-style:normal;font-family:'Liberation Sans', sans-serif;">subject</div>
<div class="t" style="left:439.27px;top:877.22px;font-size:13.5px;line-height:20px;color:#e0245e;font-weight:bold;font-style:normal;font-family:'Liberation Sans', sans-serif;">*</div>
<div class="t" style="left:448.53px;top:877.40px;font-size:13px;line-height:20px;color:#85858e;font-weight:normal;font-style:normal;font-family:'Liberation Sans', sans-serif;">(1..1)</div>
<svg class="r" style="left:482.88px;top:878.50px;" width="15" height="15" viewBox="0 0 15 15" fill="none"><rect x="0.3" y="5" width="14.4" height="5" rx="2.5" transform="rotate(-45 7.5 7.5)" stroke="#e9b41c" stroke-width="1.4"/></svg>
<div class="r" style="left:884.00px;top:873.00px;width:28.00px;height:27.00px;background:#fff;border-radius:6px;box-shadow:0 1px 2.5px rgba(30,30,60,.28);"></div>
<svg class="r" style="left:891.50px;top:880.00px;" width="14" height="12" viewBox="0 0 14 12" fill="none"><path d="M.3 2 H13.7 M.3 6.1 H13.7 M.3 10.2 H13.7" stroke="#4a4f6a" stroke-width="1.6"/></svg>
<div class="t" style="left:924.80px;top:882.32px;font-size:13.8px;line-height:20px;color:#4d4d57;font-weight:normal;font-style:normal;font-family:'Liberation Sans', sans-serif;">Reference</div>
<div class="r" style="left:355.00px;top:904.00px;width:729.00px;height:1.00px;background:#e4e3e9;"></div>
<svg class="r" style="left:367.00px;top:914.00px;" width="12" height="16" viewBox="0 0 12 16" fill="none"><path d="M3 2 L9.2 8.2 L3 14.4" stroke="#606068" stroke-width="1.4" stroke-linecap="round" stroke-linejoin="round"/></svg>
<div class="t" style="left:392.00px;top:913.22px;font-size:13.5px;line-height:20px;color:#3b3b44;font-weight:bold;font-style:normal;font-family:'Liberation Sans', sans-serif;">encounter</div>
<svg class="r" style="left:461.27px;top:914.50px;" width="15" height="15" viewBox="0 0 15 15" fill="none"><rect x="0.3" y="5" width="14.4" height="5" rx="2.5" transform="rotate(-45 7.5 7.5)" stroke="#e9b41c" stroke-width="1.4"/></svg>
<div class="r" style="left:884.00px;top:909.00px;width:28.00px;height:27.00px;background:#fff;border-radius:6px;box-shadow:0 1px 2.5px rgba(30,30,60,.28);"></div>
<svg class="r" style="left:891.50px;top:916.00px;" width="14" height="12" viewBox="0 0 14 12" fill="none"><path d="M.3 2 H13.7 M.3 6.1 H13.7 M.3 10.2 H13.7" stroke="#4a4f6a" stroke-width="1.6"/></svg>
<div class="t" style="left:924.80px;top:918.32px;font-size:13.8px;line-height:20px;color:#4d4d57;font-weight:normal;font-style:normal;font-family:'Liberation Sans', sans-serif;">Reference</div>
<div class="r" style="left:355.00px;top:940.00px;width:729.00px;height:1.00px;background:#e4e3e9;"></div>
<svg class="r" style="left:367.00px;top:950.00px;" width="12" height="16" viewBox="0 0 12 16" fill="none"><path d="M3 2 L9.2 8.2 L3 14.4" stroke="#606068" stroke-width="1.4" stroke-linecap="round" stroke-linejoin="round"/></svg>
<div class="t" style="left:392.00px;top:949.22px;font-size:13.5px;line-height:20px;color:#3b3b44;font-weight:bold;font-style:normal;font-family:'Liberation Sans', sans-serif;">identifier</div>
<div class="t" style="left:453.02px;top:949.40px;font-size:13px;line-height:20px;color:#85858e;font-weight:normal;font-style:normal;font-family:'Liberation Sans', sans-serif;">(*)</div>
<div class="r" style="left:884.00px;top:945.00px;width:28.00px;height:27.00px;background:#fff;border-radius:6px;box-shadow:0 1px 2.5px rgba(30,30,60,.28);"></div>
<svg class="r" style="left:891.50px;top:952.00px;" width="14" height="12" viewBox="0 0 14 12" fill="none"><path d="M.3 2 H13.7 M.3 6.1 H13.7 M.3 10.2 H13.7" stroke="#4a4f6a" stroke-width="1.6"/></svg>
<div class="t" style="left:924.80px;top:954.32px;font-size:13.8px;line-height:20px;color:#4d4d57;font-weight:normal;font-style:normal;font-family:'Liberation Sans', sans-serif;">Identifier</div>
<div class="r" style="left:355.00px;top:976.00px;width:729.00px;height:1.00px;background:#e4e3e9;"></div>
<div class="t" style="left:392.00px;top:985.22px;font-size:13.5px;line-height:20px;color:#4b4b53;font-weight:normal;font-style:normal;font-family:'Liberation Sans', sans-serif;">instantiates[x]</div>
<div class="r" style="left:884.00px;top:981.00px;width:28.00px;height:27.00px;background:#fff;border-radius:6px;box-shadow:0 1px 2.5px rgba(30,30,60,.28);"></div>
<svg class="r" style="left:891.50px;top:988.00px;" width="14" height="12" viewBox="0 0 14 12" fill="none"><path d="M.3 2 H13.7 M.3 6.1 H13.7 M.3 10.2 H13.7" stroke="#9a9cab" stroke-width="1.6"/></svg>
<div class="r" style="left:924.20px;top:982.00px;width:27.80px;height:27.00px;background:#fff;border-radius:6px;box-shadow:0 1px 2.5px rgba(30,30,60,.28);"></div>
<svg class="r" style="left:930.00px;top:986.50px;" width="16" height="16" viewBox="0 0 16 16" fill="none"><path d="M8 1.5 V14.5 M1.5 8 H14.5" stroke="#3a4470" stroke-width="1.4"/></svg>
<div class="r" style="left:355.00px;top:1012.00px;width:729.00px;height:1.00px;background:#e4e3e9;"></div>
<div class="t" style="left:392.00px;top:1021.22px;font-size:13.5px;line-height:20px;color:#4b4b53;font-weight:normal;font-style:normal;font-family:'Liberation Sans', sans-serif;">basedOn</div>
<div class="t" style="left:450.80px;top:1021.40px;font-size:13px;line-height:20px;color:#85858e;font-weight:normal;font-style:normal;font-family:'Liberation Sans', sans-serif;">(*)</div>
<div class="r" style="left:884.00px;top:1017.00px;width:28.00px;height:27.00px;background:#fff;border-radius:6px;box-shadow:0 1px 2.5px rgba(30,30,60,.28);"></div>
<svg class="r" style="left:891.50px;top:1024.00px;" width="14" height="12" viewBox="0 0 14 12" fill="none"><path d="M.3 2 H13.7 M.3 6.1 H13.7 M.3 10.2 H13.7" stroke="#4a4f6a" stroke-width="1.6"/></svg>
<div class="t" style="left:924.80px;top:1026.32px;font-size:13.8px;line-height:20px;color:#4d4d57;font-weight:normal;font-style:normal;font-family:'Liberation Sans', sans-serif;">Reference</div>
<div class="r" style="left:1084.00px;top:362.00px;width:15.50px;height:685.00px;background:#f4f3f7;"></div>
<div class="r" style="left:1085.30px;top:378.50px;width:12.70px;height:294.20px;background:#c4c3c8;"></div>
<svg class="r" style="left:1087.00px;top:365.00px;" width="10" height="8" viewBox="0 0 10 8" fill="none"><path d="M1 6.5 L5 1.8 L9 6.5 Z" fill="#8c8c92"/></svg>
<svg class="r" style="left:1087.00px;top:1035.00px;" width="10" height="8" viewBox="0 0 10 8" fill="none"><path d="M1 1.5 L5 6.2 L9 1.5 Z" fill="#55555c"/></svg>
<div class="r" style="left:1115.00px;top:250.00px;width:762.50px;height:804.00px;background:#fff;border-radius:0 0 5px 5px;box-shadow:0 1px 1.2px rgba(0,0,0,.45);"></div>
<div class="r" style="left:1114.50px;top:250.00px;width:1.00px;height:801.00px;background:linear-gradient(rgba(240,239,244,0),#f0eff4 20px);"></div>
<div class="r" style="left:1877.00px;top:250.00px;width:1.00px;height:801.00px;background:linear-gradient(rgba(240,239,244,0),#f0eff4 20px);"></div>
<div class="t" style="left:1124.60px;top:258.19px;font-size:16.2px;line-height:20px;color:#3a3a44;font-weight:bold;font-style:normal;font-family:'Liberation Sans', sans-serif;">Populate the element</div>
<div class="r" style="left:1124.50px;top:287.00px;width:743.50px;height:36.60px;background:#fff;border:1px solid #e6e5eb;border-radius:6px;"></div>
<div class="t" style="left:1133.40px;top:295.85px;font-size:14px;line-height:20px;color:#4a4a55;font-weight:normal;font-style:normal;font-family:'Liberation Sans', sans-serif;">code</div>
<svg class="r" style="left:1173.50px;top:298.00px;" width="11" height="15" viewBox="0 0 11 15" fill="none"><path d="M2.5 1.5 L8 7.5 L2.5 13.5" stroke="#4a4a55" stroke-width="1.4" stroke-linecap="round" stroke-linejoin="round"/></svg>
<div class="t" style="left:1193.60px;top:295.85px;font-size:14px;line-height:20px;color:#4a4a55;font-weight:normal;font-style:normal;font-family:'Liberation Sans', sans-serif;">coding</div>
<svg class="r" style="left:1245.50px;top:298.00px;" width="11" height="15" viewBox="0 0 11 15" fill="none"><path d="M2.5 1.5 L8 7.5 L2.5 13.5" stroke="#4a4a55" stroke-width="1.4" stroke-linecap="round" stroke-linejoin="round"/></svg>
<div class="t" style="left:1265.70px;top:295.85px;font-size:14px;line-height:20px;color:#4a4a55;font-weight:normal;font-style:normal;font-family:'Liberation Sans', sans-serif;">0</div>
<svg class="r" style="left:1283.50px;top:298.00px;" width="11" height="15" viewBox="0 0 11 15" fill="none"><path d="M2.5 1.5 L8 7.5 L2.5 13.5" stroke="#4a4a55" stroke-width="1.4" stroke-linecap="round" stroke-linejoin="round"/></svg>
<div class="t" style="left:1303.60px;top:295.85px;font-size:14px;line-height:20px;color:#4a4a55;font-weight:normal;font-style:normal;font-family:'Liberation Sans', sans-serif;">display</div>
<div class="t" style="left:1124.60px;top:339.85px;font-size:14px;line-height:20px;color:#9d9da5;font-weight:normal;font-style:normal;font-family:'Liberation Sans', sans-serif;">Is ValueSet Binding Required?</div>
<svg class="r" style="left:1378.00px;top:345.00px;" width="15" height="14" viewBox="0 0 15 14" fill="none"><path d="M1.5 1.5 L13.5 12.8 M13.5 1.5 L1.5 12.8" stroke="#e8192c" stroke-width="1.8" stroke-linecap="round"/></svg>
<div class="t" style="left:1504.50px;top:344.51px;font-size:14.4px;line-height:20px;color:#a0a0a8;font-weight:normal;font-style:normal;font-family:'Liberation Sans', sans-serif;">Cardinality</div>
<div class="r" style="left:1835.80px;top:340.00px;width:33.00px;height:25.80px;background:#2f7ff6;border-radius:6px;"></div>
<div class="t" style="left:1552.30px;width:600px;text-align:center;top:343.17px;font-size:12.5px;line-height:20px;color:#fff;font-weight:bold;font-style:normal;font-family:'Liberation Sans', sans-serif;">0..1</div>
<div class="t" style="left:1124.60px;top:382.00px;font-size:15px;line-height:20px;color:#9d9da5;font-weight:normal;font-style:normal;font-family:'Liberation Sans', sans-serif;">Definition</div>
<div class="t" style="left:1377.80px;top:381.51px;font-size:14.1px;line-height:20px;color:#55555f;font-weight:normal;font-style:normal;font-family:'Liberation Sans', sans-serif;">A representation of the meaning of the code in the system, following the rule...</div>
<div class="t" style="left:1124.60px;top:413.92px;font-size:13.5px;line-height:20px;color:#9d9da5;font-weight:normal;font-style:normal;font-family:'Liberation Sans', sans-serif;">Expression</div>
<svg class="r" style="left:1198.00px;top:414.00px;" width="17" height="17" viewBox="0 0 17 17" fill="none"><circle cx="8.5" cy="8.5" r="6.8" stroke="#1f7ae0" stroke-width="1.5"/><path d="M8.5 7.5 V12.6" stroke="#1f7ae0" stroke-width="1.8"/><circle cx="8.5" cy="5" r="1.05" fill="#1f7ae0"/></svg>
<svg class="r" style="left:1221.00px;top:414.00px;" width="15" height="16" viewBox="0 0 15 16" fill="none"><rect x="1.5" y="1.2" width="11.6" height="13.4" rx="1.3" stroke="#2e9a3c" stroke-width="1.4"/><path d="M4.3 4.6 H10.3 M4.3 7.3 H10.3 M4.3 10 H10.3 M1.5 12.2 H13" stroke="#2e9a3c" stroke-width="1.3"/></svg>
<svg class="r" style="left:1845.00px;top:421.00px;" width="16" height="16" viewBox="0 0 16 16" fill="none"><rect x="1" y="1" width="14" height="14" rx="1.5" stroke="#4a4a55" stroke-width="1.3"/><rect x="2.2" y="9.4" width="4.6" height="4.6" rx=".4" stroke="#4a4a55" stroke-width="1.2"/><path d="M8 8 L12.5 3.5 M8.6 3.5 H12.5 V7.4" stroke="#4a4a55" stroke-width="1.3"/></svg>
<div class="r" style="left:1124.00px;top:471.00px;width:744.50px;height:21.50px;border-top:1px solid #ecebf0;border-bottom:1px solid #ecebf0;border-right:1px solid #f0eff3;"></div>
<div class="t" style="left:1124.00px;top:450.72px;font-size:14.65px;line-height:20px;color:#333;font-weight:normal;font-style:normal;font-family:'Liberation Mono', monospace;-webkit-text-stroke:0.12px currentColor;"><span style="color:#9b2fd6">{{</span><span style="color:#2630a6">trms:lookupDisplay</span><span style="color:#222">(</span><span style="color:#2630a6">itemid.toString</span><span style="color:#222">(), </span><span style="color:#93202c">'</span><span style="color:#93202c">https://mimic.mit.edu/fhir/CodeSystem/</span></div>
<div class="t" style="left:1124.00px;top:472.92px;font-size:14.65px;line-height:20px;color:#333;font-weight:normal;font-style:normal;font-family:'Liberation Mono', monospace;-webkit-text-stroke:0.12px currentColor;"><span style="color:#93202c">labitems</span><span style="color:#93202c">'</span><span style="color:#222">, </span><span style="color:#93202c">'display'</span><span style="color:#222">)</span><span style="color:#9b2fd6">}}</span></div>
<div class="r" style="left:1485.00px;top:469.50px;width:333.50px;height:1.30px;background:#9c2a2a;"></div>
<div class="r" style="left:1124.50px;top:491.50px;width:70.00px;height:1.30px;background:#9c2a2a;"></div>
<svg class="r" style="left:1134.00px;top:556.00px;" width="42" height="56" viewBox="0 0 42 56" fill="none"><g opacity=".55"><rect x="1" y="11.6" width="6.6" height="32.6" rx="3.3" fill="#8e8e94"/><path d="M12.5 36 L17.6 44.8" stroke="#8e8e94" stroke-width="8" stroke-linecap="round"/></g><path d="M10.1 4 L10.1 35.5 L17.8 29.5 L23.3 40.2 Q24.6 42.6 27.1 41.6 Q29.4 40.4 28.2 38 L22.8 27.8 L33.3 27.8 Z" fill="#f7f6fa" stroke="#0a0a0a" stroke-width="2.2" stroke-linejoin="round"/></svg>
<svg class="r" style="left:1831.20px;top:994.50px;" width="63.4" height="63.4" viewBox="0 0 40 40" fill="none"><path d="M18.2 6.9 C20.5 7.6 22.8 10 24 12.5 C24.6 14 24.9 15.8 25 17.2 L27.1 16.3 C29.5 17.5 31 20 31.5 23 C32 27 30.8 30.5 28.5 32.3 C26.5 33.8 24.5 34.6 22.4 35 C23.9 33.5 24.3 31.5 23.7 29.8 C23.2 28 22.2 26.8 21.3 25.6 C20.3 24.3 19.2 23 18.7 21.3 C17.8 22.8 16 24 15 25.6 C14.2 26.8 13.8 28.2 13.9 29.8 C14 31.8 14.6 33.6 15.5 35 C12.5 34.3 8.5 31 7.6 25.5 C7.2 22 8.5 19.5 10.3 18.2 C12.5 16 15.5 13.8 16.6 12.2 C17.6 10.8 18.1 8.8 18.2 6.9 Z" fill="#9aa4c2"/></svg>
<div class="r" style="left:1905.00px;top:72.00px;width:15.00px;height:1008.00px;background:#f4f3fb;"></div>
<div class="r" style="left:1905.50px;top:445.00px;width:12.50px;height:617.50px;background:#c3c2c7;"></div>
<svg class="r" style="left:1906.00px;top:76.00px;" width="10" height="8" viewBox="0 0 10 8" fill="none"><path d="M1 6.5 L5 1.8 L9 6.5 Z" fill="#505058"/></svg>
<svg class="r" style="left:1906.00px;top:1066.00px;" width="10" height="8" viewBox="0 0 10 8" fill="none"><path d="M1 1.5 L5 6.2 L9 1.5 Z" fill="#8c8c92"/></svg>
</body></html>
